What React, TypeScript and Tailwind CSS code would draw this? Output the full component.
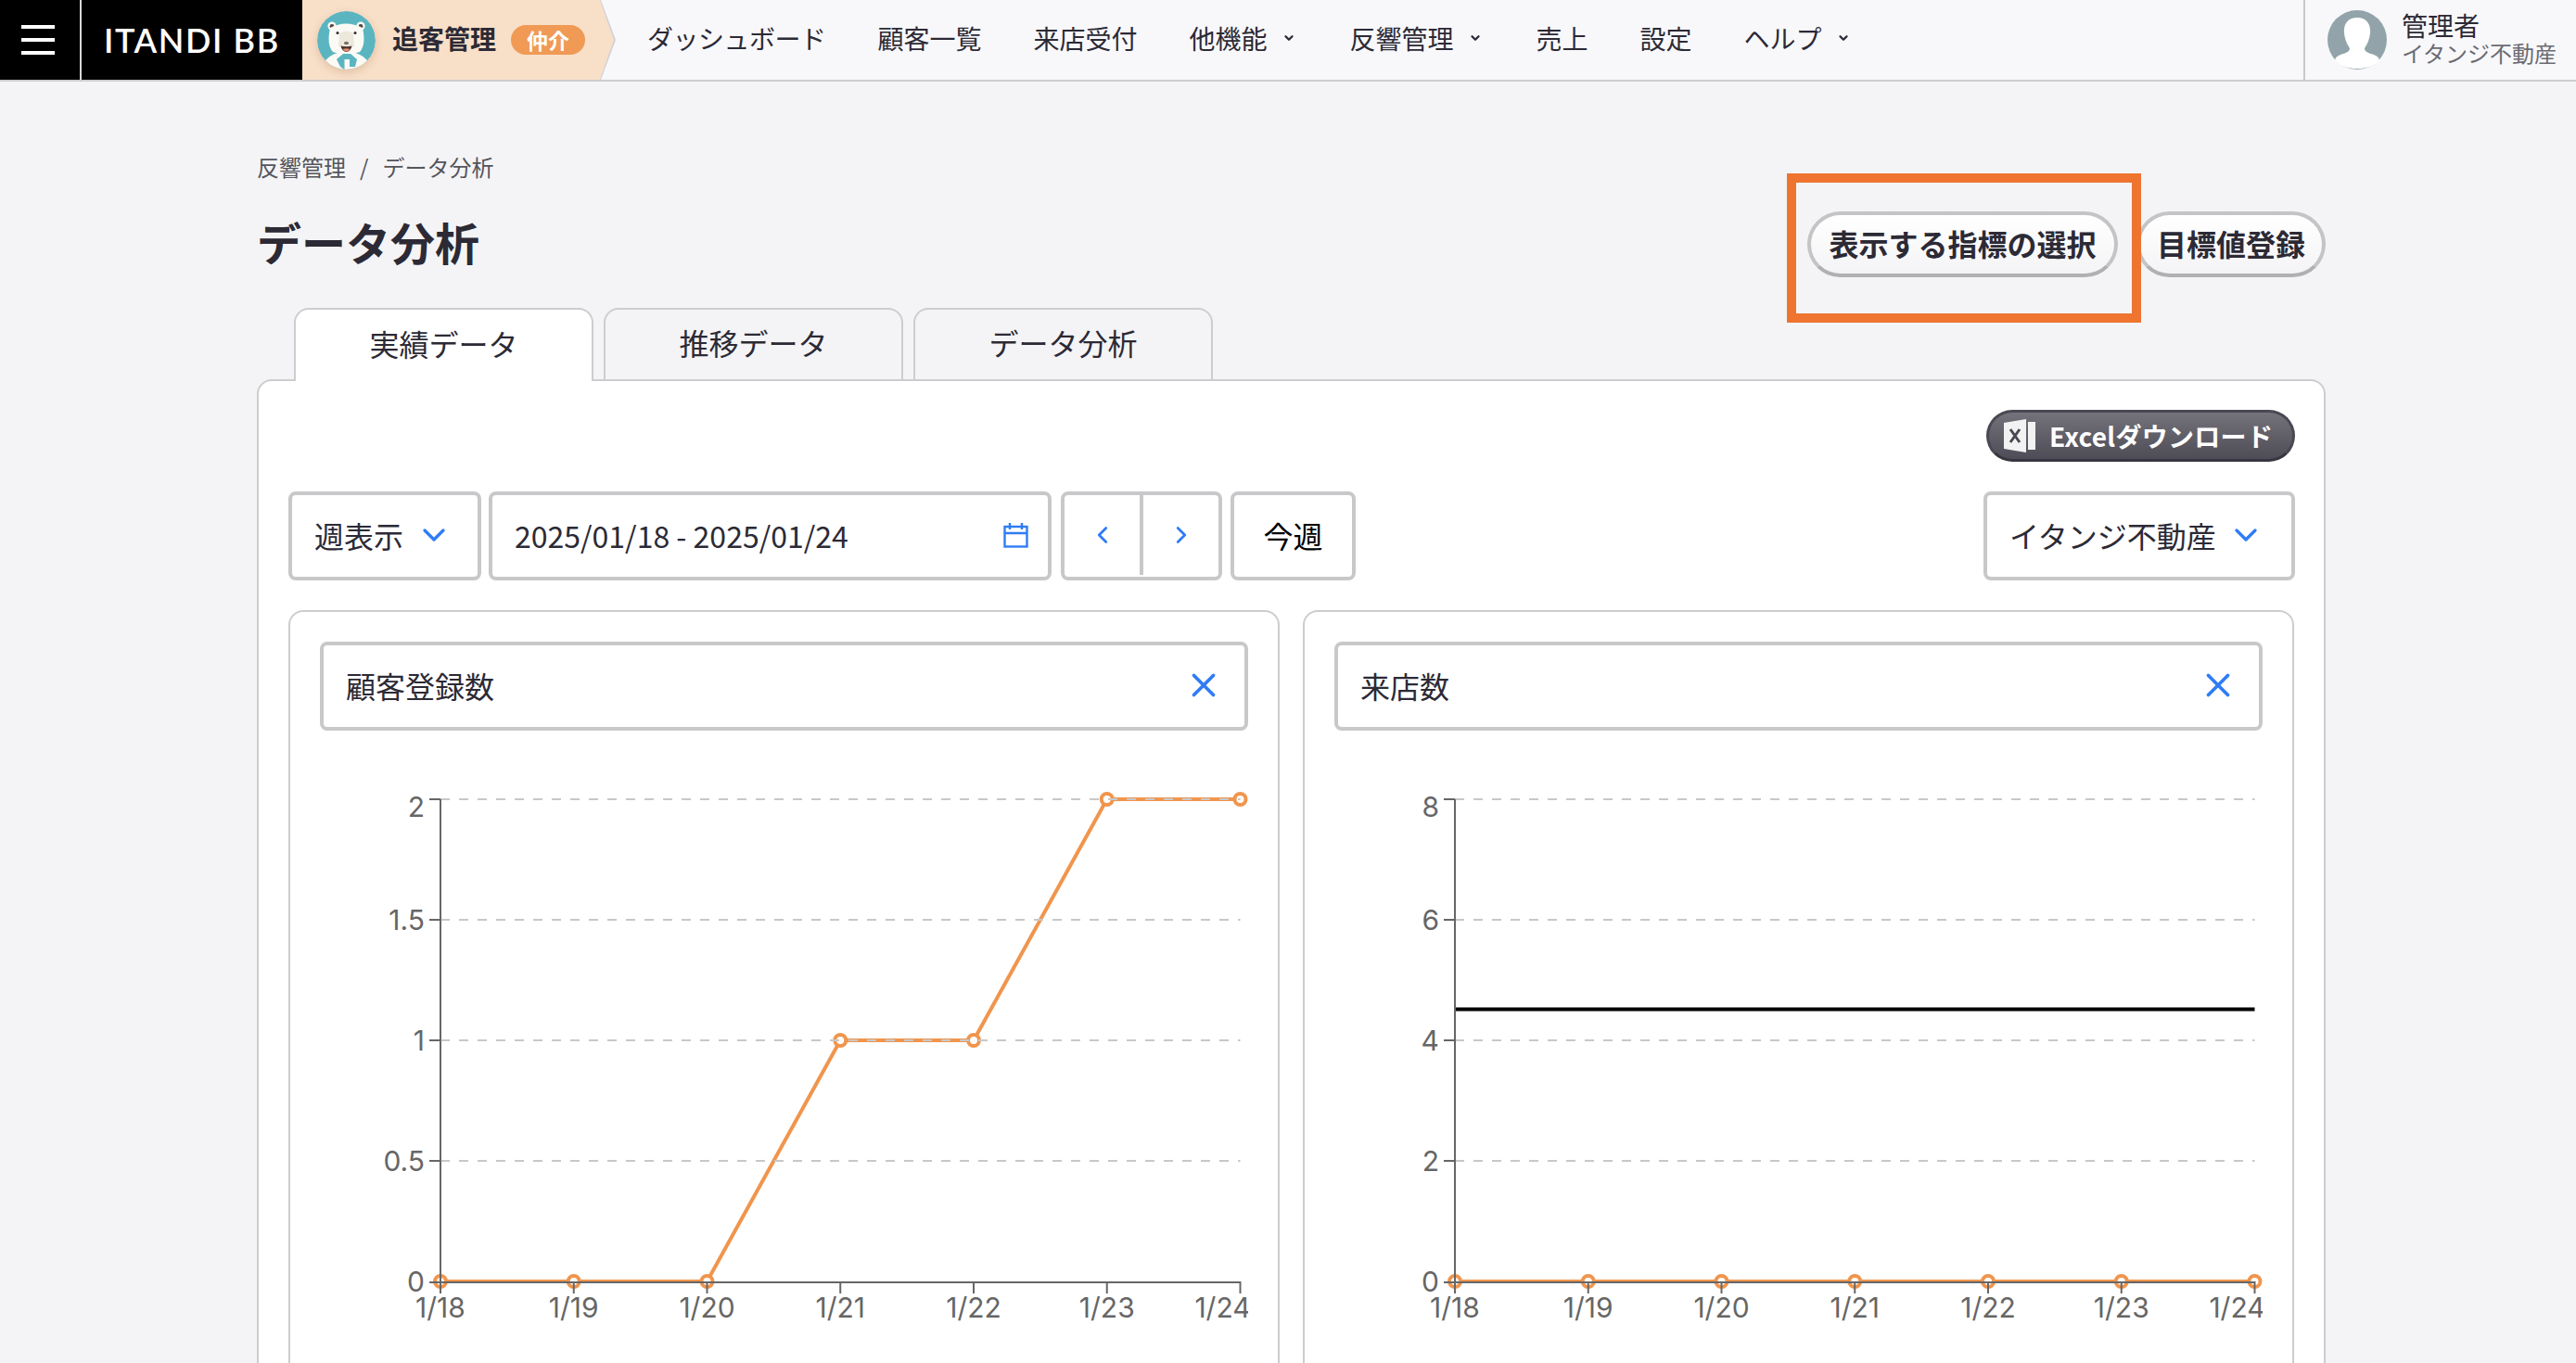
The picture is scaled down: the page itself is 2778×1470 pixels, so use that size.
import type { ReactNode } from 'react';
import { ChevronDown, ChevronLeft, ChevronRight, X } from 'lucide-react';

const font = { fontFamily: '"Noto Sans CJK JP", "Liberation Sans", sans-serif' };

const navItems = [
  { label: 'ダッシュボード', tight: true },
  { label: '顧客一覧' },
  { label: '来店受付' },
  { label: '他機能', caret: true },
  { label: '反響管理', caret: true },
  { label: '売上' },
  { label: '設定' },
  { label: 'ヘルプ', caret: true },
];

function Bear() {
  return (
    <svg viewBox="0 0 63 63" className="w-[63px] h-[63px] shrink-0 rounded-full shadow-[0_3px_8px_rgba(170,120,80,0.3)]">
      <defs>
        <clipPath id="bear-clip">
          <circle cx="31.5" cy="31.5" r="31.5" />
        </clipPath>
      </defs>
      <g clipPath="url(#bear-clip)">
        <rect width="63" height="63" fill="#5bb5c0" />
        <path d="M5 63 L8 55 Q12 48 22 45 L41 45 Q51 48 55 55 L58 63 Z" fill="#fbfaf5" />
        <circle cx="16" cy="16" r="4.6" fill="#fbfaf5" />
        <circle cx="47" cy="16" r="4.6" fill="#fbfaf5" />
        <circle cx="16" cy="16.5" r="2.4" fill="#55463f" />
        <circle cx="47" cy="16.5" r="2.4" fill="#55463f" />
        <path d="M14 18 Q31 9 49 18 Q53 36 46 44 Q31 50 17 44 Q10 36 14 18 Z" fill="#fbfaf5" />
        <circle cx="22" cy="23.5" r="1.5" fill="#2e2a2a" />
        <circle cx="41" cy="23.5" r="1.5" fill="#2e2a2a" />
        <path d="M24 24 Q31.5 19 39 24 L40 38 Q31.5 44 23 38 Z" fill="#ece8dc" />
        <ellipse cx="31.5" cy="34.5" rx="2.6" ry="1.7" fill="#7d6f66" />
        <path d="M25.5 37.5 Q31.5 39 37.5 37.5 Q36 44 31.5 44 Q27 44 25.5 37.5 Z" fill="#4d332c" />
        <path d="M27.5 41 Q31.5 39.5 35.5 41 Q33.5 43.5 31.5 43.5 Q29.5 43.5 27.5 41 Z" fill="#e58a74" />
        <path d="M21 52 L28 46 L36 46 L43 52 L41 60 L35 60 L35 52 L29.5 52 L29.5 63 L25 60 Z" fill="#5bb5c0" />
      </g>
    </svg>
  );
}

function Avatar() {
  return (
    <svg viewBox="0 0 64 64" className="w-[64px] h-[64px] shrink-0">
      <circle cx="32" cy="32" r="32" fill="#92a4aa" />
      <path d="M32 8 C42 8 47 15 46 25 C45 33 42 38 40 41 C40 45 44 46 50 48 C55 50 57 53 55 55 C49 61 41 63 32 63 C23 63 15 61 9 55 C7 53 9 50 14 48 C20 46 24 45 24 41 C22 38 19 33 18 25 C17 15 22 8 32 8 Z" fill="#fff" />
    </svg>
  );
}

function Header() {
  return (
    <header className="h-[88px] flex border-b-2 border-[#cdcdd0] bg-[#f8f8fb]">
      <div className="w-[326px] bg-black flex shrink-0 text-white">
        <div className="w-[88px] border-r-2 border-[#d8d8d8] flex flex-col items-center justify-center gap-[10px] pr-[4px]">
          <div className="w-[36px] h-[4px] bg-white" />
          <div className="w-[36px] h-[4px] bg-white" />
          <div className="w-[36px] h-[4px] bg-white" />
        </div>
        <div className="flex-1 flex items-center pl-[24px] text-[36px] font-semibold tracking-[1.6px]" style={{ fontFamily: '"Lato", sans-serif' }}>
          ITANDI BB
        </div>
      </div>
      <div className="w-[338px] h-[86px] shrink-0 bg-[#d0d1d6] [clip-path:polygon(0_0,322px_0,338px_43px,322px_100%,0_100%)]">
        <div className="w-[336px] h-[86px] bg-[#f8dfc8] [clip-path:polygon(0_0,321px_0,336px_43px,321px_100%,0_100%)] flex items-center pl-[16px]">
          <Bear />
          <span className="ml-[18px] text-[28px] font-bold text-[#2c2a35] pb-[4px]">追客管理</span>
          <span className="ml-[16px] w-[80px] h-[32px] rounded-full bg-[#f09a55] text-white text-[23px] font-bold flex items-center justify-center">仲介</span>
        </div>
      </div>
      <nav className="flex-1 flex items-center pl-[34px] pb-[5px] gap-[56px] text-[28px] text-[#2c2a35]">
        {navItems.map((item) => (
          <div key={item.label} className="flex items-center gap-[16px]">
            <span className={item.tight ? 'tracking-[-0.5px]' : ''}>{item.label}</span>
            {item.caret && <ChevronDown className="w-[14px] h-[14px] mr-[3px]" strokeWidth={4} />}
          </div>
        ))}
      </nav>
      <div className="w-[294px] shrink-0 border-l-2 border-[#c8c8ca] flex items-center pl-[24px] gap-[16px]">
        <Avatar />
        <div className="pb-[5px]">
          <div className="text-[28px] leading-[32px] text-[#2c2a35]">管理者</div>
          <div className="text-[24px] leading-[28px] text-[#6b6b72]">イタンジ不動産</div>
        </div>
      </div>
    </header>
  );
}

function Tab({ label, active }: { label: string; active?: boolean }) {
  return (
    <div
      className={
        active
          ? 'w-[323px] h-[79px] pb-[6px] -mb-[2px] relative z-10 bg-white border-2 border-b-0 border-[#cdcdd0] rounded-t-[16px] flex items-center justify-center text-[32px] text-[#2c2a35]'
          : 'w-[323px] h-[77px] pb-[6px] bg-[#f4f4f6] border-2 border-b-0 border-[#cdcdd0] rounded-t-[16px] flex items-center justify-center text-[32px] text-[#2c2a35]'
      }
    >
      {label}
    </div>
  );
}

const boxClass = 'h-[96px] pb-[2px] bg-white border-[4px] border-[#c8c8ca] rounded-[8px] flex items-center text-[32px] text-[#2c2a35]';

function Controls() {
  return (
    <div className="flex items-center mt-[32px]">
      <div className={`${boxClass} w-[208px] pl-[24px]`}>
        <span>週表示</span>
        <ChevronDown className="w-[40px] h-[40px] ml-[13px] text-[#2f7cf6]" strokeWidth={2} />
      </div>
      <div className={`${boxClass} w-[607px] ml-[8px] pl-[24px] pr-[21px] justify-between`}>
        <span>2025/01/18 - 2025/01/24</span>
        <svg viewBox="0 0 27 27" className="w-[27px] h-[27px]" fill="none" stroke="#2f7cf6" strokeWidth="2.4">
          <rect x="1.5" y="4" width="24" height="21.5" />
          <path d="M1.5 11 H25.5 M7 0 V7 M20 0 V7" />
        </svg>
      </div>
      <div className={`${boxClass} w-[174px] ml-[10px]`}>
        <div className="flex-1 h-full flex items-center justify-center">
          <ChevronLeft className="w-[30px] h-[30px] text-[#2f7cf6]" strokeWidth={2.2} />
        </div>
        <div className="flex-1 h-full border-l-[4px] border-[#c8c8ca] flex items-center justify-center">
          <ChevronRight className="w-[30px] h-[30px] text-[#2f7cf6]" strokeWidth={2.2} />
        </div>
      </div>
      <div className={`${boxClass} w-[135px] ml-[9px] justify-center text-black`}>今週</div>
      <div className={`${boxClass} w-[336px] ml-auto pl-[24px]`}>
        <span>イタンジ不動産</span>
        <ChevronDown className="w-[40px] h-[40px] ml-[12px] text-[#2f7cf6]" strokeWidth={2} />
      </div>
    </div>
  );
}

function Chart({ yTicks, points, target }: { yTicks: string[]; points: number[]; target?: number }) {
  const labels = ['1/18', '1/19', '1/20', '1/21', '1/22', '1/23', '1/24'];
  const x0 = 130;
  const step = 143.75;
  const top = 64;
  const bottom = 584;
  const right = x0 + 6 * step;
  const max = Number(yTicks[yTicks.length - 1]);
  const yOf = (v: number) => bottom - (v / max) * (bottom - top);
  const line = points.map((p, i) => `${x0 + i * step},${yOf(p)}`).join(' ');
  return (
    <svg viewBox="0 0 1001 680" className="w-[1001px] h-[680px] mt-[10px]" style={{ fontFamily: 'Inter, "Liberation Sans", sans-serif' }}>
      {target !== undefined && <line x1={x0} x2={right} y1={yOf(target) - 1} y2={yOf(target) - 1} stroke="#000" strokeWidth="4" />}
      <polyline points={line} fill="none" stroke="#f0954d" strokeWidth="4" />
      {points.map((p, i) => (
        <circle key={i} cx={x0 + i * step} cy={yOf(p)} r="6" fill="#fff" stroke="#f0954d" strokeWidth="4" />
      ))}
      {yTicks.map((t) => {
        const y = yOf(Number(t));
        const labelY = Number(t) === max ? y + 19 : y + 11;
        return (
          <g key={t}>
            {Number(t) > 0 && <line x1={x0} x2={right} y1={y} y2={y} stroke="#c8c8c8" strokeWidth="2" strokeDasharray="10 10" />}
            {Number(t) > 0 && <line x1={x0 - 12} x2={x0} y1={y} y2={y} stroke="#666" strokeWidth="2" />}
            <text x={x0 - 17} y={labelY} textAnchor="end" fontSize="30" fill="#666">{t}</text>
          </g>
        );
      })}
      <line x1={x0} x2={x0} y1={top} y2={bottom + 13} stroke="#666" strokeWidth="2" />
      <line x1={x0 - 12} x2={right} y1={bottom + 1} y2={bottom + 1} stroke="#666" strokeWidth="2" />
      {labels.map((l, i) => (
        <g key={l}>
          <line x1={x0 + i * step} x2={x0 + i * step} y1={bottom} y2={bottom + 13} stroke="#666" strokeWidth="2" />
          <text x={i === 6 ? x0 + i * step - 19 : x0 + i * step} y={bottom + 39} textAnchor="middle" fontSize="30" fill="#666">{l}</text>
        </g>
      ))}
    </svg>
  );
}

function Panel({ title, children }: { title: string; children: ReactNode }) {
  return (
    <div className="w-[1069px] shrink-0 h-[900px] border-2 border-[#cdcdd0] rounded-[16px] pl-[32px] pt-[32px]">
      <div className={`${boxClass} w-[1001px] pl-[24px] pr-[23px] justify-between`}>
        <span>{title}</span>
        <X className="w-[42px] h-[42px] text-[#2f7cf6]" strokeWidth={2.1} />
      </div>
      {children}
    </div>
  );
}

export default function App() {
  return (
    <div className="h-[1470px] overflow-hidden bg-[#f4f4f6] relative" style={font}>
      <Header />
      <main className="pl-[277px] pr-[270px]">
        <div className="pt-[78px] text-[24px] leading-[28px] text-[#55555c] flex gap-[15px]">
          <span>反響管理</span>
          <span>/</span>
          <span>データ分析</span>
        </div>
        <div className="flex items-start justify-between mt-[20px]">
          <h1 className="text-[48px] leading-[72px] font-bold text-[#2c2a35] mt-[10px]">データ分析</h1>
          <div className="flex gap-[20px] mt-[14px]">
            <button className="w-[335px] h-[71px] pb-[3px] rounded-full bg-gradient-to-b from-white to-[#f4f4f6] border-[4px] border-[#c4c4c6] border-b-[#b0b0b2] text-[32px] font-bold text-[#2c2a35]">表示する指標の選択</button>
            <button className="w-[204px] h-[71px] pb-[3px] rounded-full bg-gradient-to-b from-white to-[#f4f4f6] border-[4px] border-[#c4c4c6] border-b-[#b0b0b2] text-[32px] font-bold text-[#2c2a35]">目標値登録</button>
          </div>
        </div>
        <div className="flex gap-[11px] pl-[40px] mt-[33px]">
          <Tab label="実績データ" active />
          <Tab label="推移データ" />
          <Tab label="データ分析" />
        </div>
        <section className="h-[1100px] bg-white border-2 border-[#cdcdd0] rounded-[16px] pl-[32px] pr-[31px] pt-[31px]">
          <div className="flex justify-end">
            <button className="w-[333px] h-[56px] pl-[16px] rounded-full bg-gradient-to-b from-[#74737b] to-[#4e4c56] border-[3px] border-[#4a4852] border-b-[#37353f] text-white text-[28px] font-bold flex items-center gap-[15px]">
              <svg viewBox="0 0 34 36" className="w-[34px] h-[36px] shrink-0">
                <path d="M0 4 L24 0 V36 L0 32 Z" fill="#f2f2f2" />
                <rect x="26" y="3" width="8" height="30" fill="#f2f2f2" />
                <path d="M7 11 L17 25 M17 11 L7 25" stroke="#4a4852" strokeWidth="3" />
              </svg>
              <span className="tracking-[0.3px]">Excelダウンロード</span>
            </button>
          </div>
          <Controls />
          <div className="flex gap-[25px] mt-[32px]">
            <Panel title="顧客登録数">
              <Chart yTicks={['0', '0.5', '1', '1.5', '2']} points={[0, 0, 0, 1, 1, 2, 2]} />
            </Panel>
            <Panel title="来店数">
              <Chart yTicks={['0', '2', '4', '6', '8']} points={[0, 0, 0, 0, 0, 0, 0]} target={4.5} />
            </Panel>
          </div>
        </section>
      </main>
      <div className="absolute left-[1927px] top-[187px] w-[382px] h-[161px] border-[10px] border-[#ee7430]" />
    </div>
  );
}
